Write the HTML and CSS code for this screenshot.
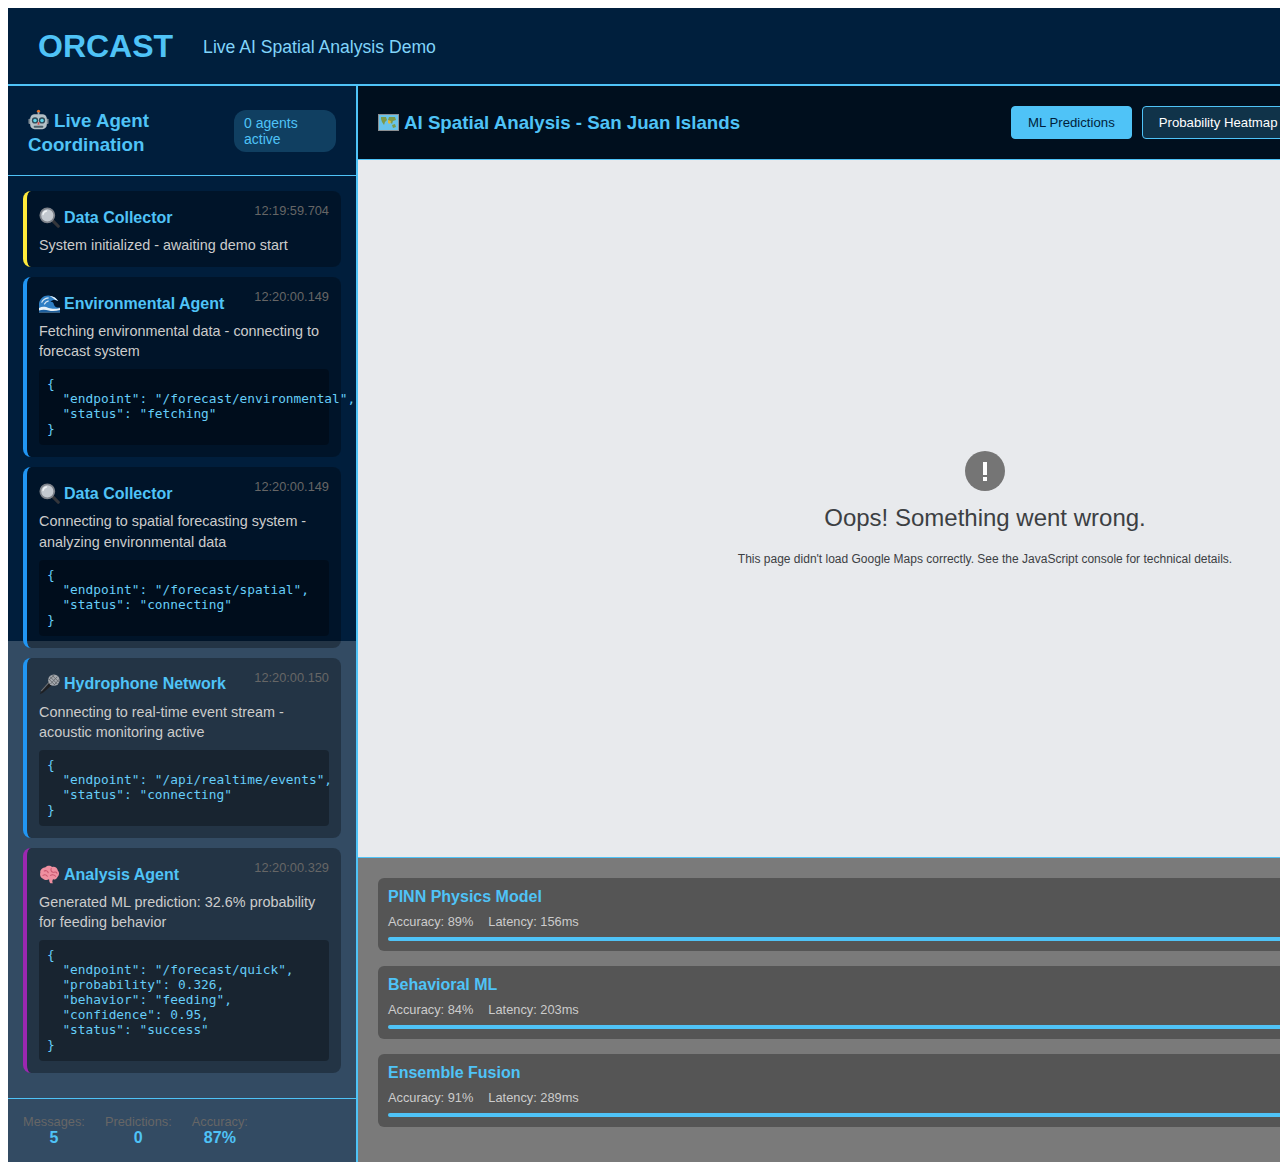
FILE: index.html

```html
<!DOCTYPE html>
<html lang="en">
<head>
<meta charset="UTF-8">
<meta name="viewport" content="width=device-width, initial-scale=1.0">
<title>ORCAST - Live AI Spatial Analysis Demo</title>
<link rel="stylesheet" href="styles.css">
</head>
<body>

<svg class="icon-defs" width="0" height="0" aria-hidden="true">
    <symbol id="ico-lens" viewBox="0 0 24 24">
        <path d="M14.5 14.5 L22 22" stroke="#34363b" stroke-width="3.6" stroke-linecap="round"/>
        <circle cx="9.5" cy="9.5" r="8" fill="#c3c9d0" stroke="#7d828a" stroke-width="2"/>
        <path d="M4.6 8.5a5 5 0 0 1 4-4" fill="none" stroke="#f2f4f6" stroke-width="1.6" stroke-linecap="round"/>
    </symbol>
</svg>

<div class="app">
    <header class="top-bar">
        <h1 class="logo">ORCAST</h1>
        <span class="tagline">Live AI Spatial Analysis Demo</span>
    </header>

    <div class="workspace">
        <aside class="sidebar">
            <div class="side-head">
                <h2 class="side-title">
                    <svg class="emoji emoji-lg" viewBox="0 0 24 24">
                        <circle cx="12" cy="2.6" r="1.8" fill="#e8742c"/>
                        <rect x="11" y="3.5" width="2" height="3" fill="#9aa5ad"/>
                        <rect x="0.5" y="11" width="3" height="6" rx="1" fill="#7d8a93"/>
                        <rect x="20.5" y="11" width="3" height="6" rx="1" fill="#7d8a93"/>
                        <rect x="2.5" y="6" width="19" height="17" rx="5" fill="#b4c0c6"/>
                        <circle cx="8" cy="13" r="3.6" fill="#2e4a58"/>
                        <circle cx="16" cy="13" r="3.6" fill="#2e4a58"/>
                        <circle cx="8" cy="13" r="2" fill="#5fd3e8"/>
                        <circle cx="16" cy="13" r="2" fill="#5fd3e8"/>
                        <rect x="11" y="15" width="2" height="3" fill="#d8504a"/>
                        <rect x="6.5" y="19" width="11" height="2.4" rx="1" fill="#4a5f6a"/>
                    </svg>Live Agent Coordination
                </h2>
                <span class="agent-badge">0 agents active</span>
            </div>

            <div class="feed">
                <div class="agent-card card-yellow">
                    <div class="card-head">
                        <div class="agent-name"><svg class="emoji"><use href="#ico-lens"/></svg>Data Collector</div>
                        <span class="stamp">12:19:59.704</span>
                    </div>
                    <div class="agent-msg">System initialized - awaiting demo start</div>
                </div>

                <div class="agent-card card-blue">
                    <div class="card-head">
                        <div class="agent-name">
                            <svg class="emoji" viewBox="0 0 24 24">
                                <path d="M0 22V12C1 6 6 2 12 3c5 .6 8 3 10 6-3-1.500-7-1.500-9 1 2-.5 4 1 4 3 1 3 4 4 7 3.500V22z" fill="#2f7fc4"/>
                                <path d="M3 11c1-3 4-5 8-5.500M6 13c1-2 2.500-3.500 5-4" fill="none" stroke="#d6e8f4" stroke-width="1.300"/>
                                <path d="M12 3c5 .6 8 3 10 6l-3-1c-2-2-5-3.500-7-5z" fill="#e8f2f8"/>
                                <path d="M0 22v-5c4-2 8-1 11 0s8 1.500 13 0v5z" fill="#e8f2f8"/>
                                <path d="M0 20c4-1.500 8-1 11 0s8 1 13-.5V22H0z" fill="#1d5f9e"/>
                            </svg>Environmental Agent
                        </div>
                        <span class="stamp">12:20:00.149</span>
                    </div>
                    <div class="agent-msg">Fetching environmental data - connecting to forecast system</div>
<pre class="agent-data">{
  "endpoint": "/forecast/environmental",
  "status": "fetching"
}</pre>
                </div>

                <div class="agent-card card-blue">
                    <div class="card-head">
                        <div class="agent-name"><svg class="emoji"><use href="#ico-lens"/></svg>Data Collector</div>
                        <span class="stamp">12:20:00.149</span>
                    </div>
                    <div class="agent-msg">Connecting to spatial forecasting system - analyzing environmental data</div>
<pre class="agent-data">{
  "endpoint": "/forecast/spatial",
  "status": "connecting"
}</pre>
                </div>

                <div class="agent-card card-blue">
                    <div class="card-head">
                        <div class="agent-name">
                            <svg class="emoji" viewBox="0 0 24 24">
                                <path d="M13 7.500 L2.500 19.500 L1 23 L4.500 21.500 L16.500 11z" fill="#1e2024"/>
                                <path d="M12 9 L2.500 19.500" stroke="#6a6e73" stroke-width="1.200"/>
                                <circle cx="17" cy="7" r="6.500" fill="#a4a8ad"/>
                                <path d="M12.500 3 L21 11.500 M15 1.500 L22.500 9 M11 5.500 L18.500 13 M21 3 L13 11.500 M17.500 1 L12 6.500 M23 6 L17 13" stroke="#63676c" stroke-width="1"/>
                            </svg>Hydrophone Network
                        </div>
                        <span class="stamp">12:20:00.150</span>
                    </div>
                    <div class="agent-msg">Connecting to real-time event stream - acoustic monitoring active</div>
<pre class="agent-data">{
  "endpoint": "/api/realtime/events",
  "status": "connecting"
}</pre>
                </div>

                <div class="agent-card card-purple">
                    <div class="card-head">
                        <div class="agent-name">
                            <svg class="emoji" viewBox="0 0 24 24">
                                <path d="M7 4c2-2.500 6-2.500 8-.5 3-1 6 1 6.500 4 2 2 2 5.500-.5 7.500-1 2-3 3-5 2.500-1 2-1 3.500 0 4.500h-3c-1-1-1.500-3-1.500-4.500-2 1-5 1-6.500-.5C2.500 16.500.500 13 1.500 10 1 7 3.500 4 7 4z" fill="#ef8fa0"/>
                                <path d="M6 8c2-1 4 0 4.500 2M14 5c-1 2 0 4 2 4.500M4.500 13c2-1 4-.5 5 1M13 13c2-1 4.500-.5 6 1M17 9.500c1.500-.5 3 0 3.500 1" fill="none" stroke="#c9566e" stroke-width="1.200" stroke-linecap="round"/>
                            </svg>Analysis Agent
                        </div>
                        <span class="stamp">12:20:00.329</span>
                    </div>
                    <div class="agent-msg">Generated ML prediction: 32.6% probability for feeding behavior</div>
<pre class="agent-data">{
  "endpoint": "/forecast/quick",
  "probability": 0.326,
  "behavior": "feeding",
  "confidence": 0.95,
  "status": "success"
}</pre>
                </div>
            </div>

            <div class="side-stats">
                <div class="stat"><span class="stat-label">Messages:</span><span class="stat-value">5</span></div>
                <div class="stat"><span class="stat-label">Predictions:</span><span class="stat-value">0</span></div>
                <div class="stat"><span class="stat-label">Accuracy:</span><span class="stat-value">87%</span></div>
            </div>
        </aside>

        <main class="main">
            <div class="map-head">
                <h2 class="map-title">
                    <svg class="emoji-map" viewBox="0 0 21 17">
                        <rect width="21" height="17" fill="#8b8f92"/>
                        <rect x="1" y="1" width="19" height="15" fill="#69c3ea"/>
                        <path d="M3 3h5l1 3-2 2-1 3-2-3-1-3zM11 3h6l1 3-3 1-1 3-2-2-2-2zM14 11l3-1 1 3-3 1z" fill="#7f9a48"/>
                        <path d="M10 6l3 1-1 3-2-1z" fill="#e0b93c"/>
                    </svg>AI Spatial Analysis - San Juan Islands
                </h2>
                <div class="view-tabs">
                    <button class="tab tab-active">ML Predictions</button>
                    <button class="tab">Probability Heatmap</button>
                </div>
            </div>

            <div class="map-box">
                <svg class="map-error-icon" viewBox="0 0 40 40">
                    <circle cx="20" cy="20" r="20" fill="#757575"/>
                    <rect x="18" y="11" width="4" height="13" fill="#fff"/>
                    <rect x="18" y="26" width="4" height="4" fill="#fff"/>
                </svg>
                <div class="map-error-title">Oops! Something went wrong.</div>
                <div class="map-error-text">This page didn't load Google Maps correctly. See the JavaScript console for technical details.</div>
            </div>

            <div class="models">
                <div class="model-card">
                    <div class="model-name">PINN Physics Model</div>
                    <div class="model-stats"><span>Accuracy: 89%</span><span>Latency: 156ms</span></div>
                    <div class="model-bar"></div>
                </div>
                <div class="model-card">
                    <div class="model-name">Behavioral ML</div>
                    <div class="model-stats"><span>Accuracy: 84%</span><span>Latency: 203ms</span></div>
                    <div class="model-bar"></div>
                </div>
                <div class="model-card">
                    <div class="model-name">Ensemble Fusion</div>
                    <div class="model-stats"><span>Accuracy: 91%</span><span>Latency: 289ms</span></div>
                    <div class="model-bar"></div>
                </div>
            </div>
        </main>
    </div>
</div>

</body>
</html>
```

FILE: styles.css

```css
html, body {
    height: 100%;
    overflow: hidden;
}

body {
    margin: 8px 0 0 8px;
    background: #fff;
    font-family: "Liberation Sans", Arial, sans-serif;
}

.icon-defs {
    display: block;
    height: 0;
}

/* the dark page colour stops at 641px, below it the panels sit on white */
.app {
    display: flex;
    flex-direction: column;
    width: 1604px;
    height: 1154px;
    background: linear-gradient(#001e3c, #001e3c) no-repeat;
    background-size: 100% 633px;
    color: #fff;
}

.top-bar {
    display: flex;
    align-items: center;
    gap: 30px;
    padding: 20px 30px;
    background: #001f3d;
    border-bottom: 2px solid #4fc3f7;
}

.logo {
    margin: 0;
    font-size: 32px;
    line-height: 36px;
    color: #4fc3f7;
}

.tagline {
    padding-top: 2px;
    font-size: 17.6px;
    color: #81d4fa;
}

.workspace {
    display: flex;
    flex: 1;
    min-height: 0;
}

.sidebar {
    display: flex;
    flex-direction: column;
    width: 348px;
    background: rgba(0, 30, 60, 0.8);
    border-right: 2px solid #4fc3f7;
}

.side-head {
    display: flex;
    align-items: center;
    justify-content: space-between;
    padding: 19px 20px 18px;
    border-bottom: 1px solid #4fc3f7;
}

.side-title {
    width: 190px;
    margin: 0;
    padding-top: 4px;
    font-size: 18.72px;
    line-height: 24px;
    color: #4fc3f7;
}

.agent-badge {
    width: 82px;
    padding: 5px 10px;
    border-radius: 12px;
    background: rgba(79, 195, 247, 0.2);
    font-size: 14px;
    line-height: 16px;
    color: #4fc3f7;
}

.feed {
    padding: 15px;
}

.agent-card {
    margin-bottom: 10px;
    padding: 12px;
    border-radius: 8px;
    border-left: 4px solid #2196f3;
    background: rgba(0, 0, 0, 0.3);
}

.card-yellow { border-left-color: #ffeb3b; }
.card-blue { border-left-color: #2196f3; }
.card-purple { border-left-color: #9c27b0; }

.card-head {
    display: flex;
    justify-content: space-between;
    align-items: flex-start;
    height: 32px;
}

.agent-name {
    display: flex;
    align-items: center;
    height: 29px;
    font-size: 16px;
    font-weight: bold;
    color: #4fc3f7;
}

.emoji {
    flex: none;
    width: 21px;
    height: 21px;
    margin-right: 4px;
}

.emoji-lg {
    width: 21px;
    height: 21px;
    margin-right: 5px;
    vertical-align: -3px;
}

.emoji-map {
    width: 21px;
    height: 17px;
    margin-right: 5px;
    vertical-align: -2px;
}

.stamp {
    font-size: 12.8px;
    line-height: 16px;
    color: #666;
}

.agent-msg {
    font-size: 14.4px;
    line-height: 20.16px;
    color: #ccc;
}

.agent-data {
    margin: 8px 0 0;
    padding: 7px 8px 9px;
    border-radius: 4px;
    background: rgba(0, 0, 0, 0.3);
    font-family: "DejaVu Sans Mono", "Liberation Mono", monospace;
    font-size: 12.8px;
    line-height: 15px;
    color: #66cdf8;
}

.side-stats {
    display: flex;
    gap: 20px;
    padding: 15px;
    border-top: 1px solid #4fc3f7;
}

.stat {
    display: flex;
    flex-direction: column;
    align-items: center;
}

.stat-label {
    font-size: 12.8px;
    line-height: 16px;
    color: #666;
}

.stat-value {
    font-size: 16px;
    font-weight: bold;
    line-height: 16px;
    color: #4fc3f7;
}

.main {
    display: flex;
    flex-direction: column;
    flex: 1;
    min-width: 0;
}

.map-head {
    display: flex;
    align-items: center;
    justify-content: space-between;
    padding: 20px;
    background: rgba(0, 0, 0, 0.5);
    border-bottom: 1px solid #4fc3f7;
}

.map-title {
    margin: 0;
    font-size: 18.72px;
    color: #4fc3f7;
}

.view-tabs {
    display: flex;
    gap: 10px;
    width: 581px;
}

.tab {
    padding: 8px 16px;
    border: 1px solid #4fc3f7;
    border-radius: 4px;
    background: rgba(79, 195, 247, 0.2);
    font-family: inherit;
    font-size: 13.2px;
    line-height: 15px;
    color: #fff;
    cursor: pointer;
}

.tab-active {
    background: #4fc3f7;
    color: #001e3c;
}

.map-box {
    display: flex;
    flex-direction: column;
    align-items: center;
    justify-content: center;
    height: 697px;
    background: #e8eaed;
    color: #3c4043;
}

.map-error-icon {
    width: 40px;
    height: 40px;
}

.map-error-title {
    margin-top: 12px;
    font-size: 24px;
    line-height: 30px;
}

.map-error-text {
    margin-top: 18px;
    font-size: 12px;
    line-height: 16px;
}

.models {
    display: flex;
    flex-direction: column;
    flex: 1;
    gap: 15px;
    padding: 20px;
    background: rgba(0, 0, 0, 0.52);
    border-top: 1px solid #4fc3f7;
}

.model-card {
    padding: 10px;
    border-radius: 6px;
    background: rgba(0, 0, 0, 0.3);
}

.model-name {
    font-size: 16px;
    font-weight: bold;
    line-height: 18px;
    color: #4fc3f7;
}

.model-stats {
    display: flex;
    gap: 15px;
    margin-top: 9px;
    font-size: 12.8px;
    line-height: 14px;
    color: #ccc;
}

.model-bar {
    height: 4px;
    margin-top: 8px;
    border-radius: 2px;
    background: #4fc3f7;
}
```
